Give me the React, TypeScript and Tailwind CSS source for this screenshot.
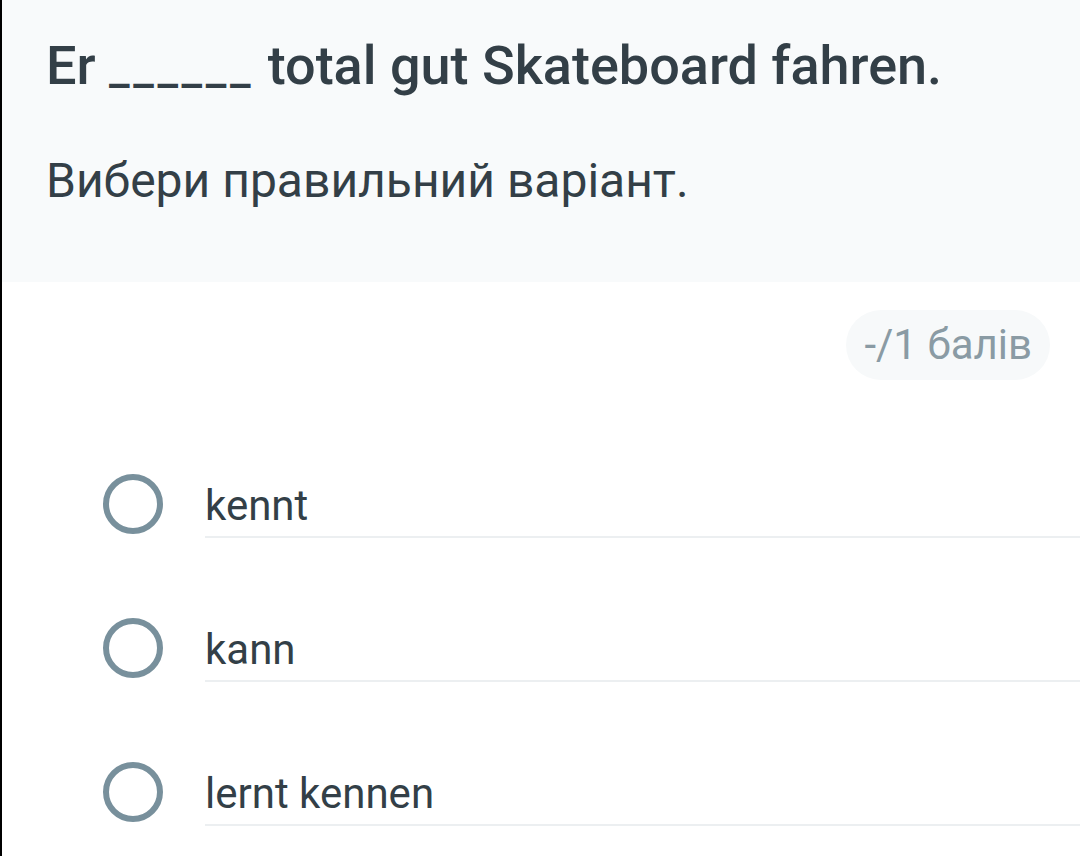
const options = ["kennt", "kann", "lernt kennen"];

function RadioRow({ label }: { label: string }) {
    return (
        <div className="flex items-start">
            <div className="ml-[101px] h-[60px] w-[60px] shrink-0 rounded-full border-[6px] border-[#78909c]" />
            <div className="ml-[42px] mt-[7px] flex-1 border-b-2 border-[#eceff1] pb-[5px]">
                <span className="block text-[42px] leading-[50px] text-[#333f47]">{label}</span>
            </div>
        </div>
    );
}

export default function App() {
    return (
        <div className="h-[856px] w-[1080px] overflow-hidden border-l-2 border-black bg-white font-['Roboto',sans-serif]">
            <div className="h-[282px] bg-[#f8fafb] pl-[44px] pt-[36px]">
                <h1 className="text-[54px] font-medium leading-[60px] text-[#333f47]">
                    Er <span className="text-[46px] tracking-[3.6px]">______</span> total gut Skateboard fahren.
                </h1>
                <p className="mt-[55px] text-[48px] leading-[56px] text-[#333f47]">Вибери правильний варіант.</p>
            </div>

            <div className="mt-[28px] flex justify-end pr-[30px]">
                <div className="flex h-[70px] items-center rounded-full bg-[#f7f9fa] px-[18px] text-[42px] leading-[70px] text-[#8a9ba4]">
                    -/1 балів
                </div>
            </div>

            <div className="mt-[94px] flex flex-col gap-[80px]">
                {options.map((o) => (
                    <RadioRow key={o} label={o} />
                ))}
            </div>
        </div>
    );
}
